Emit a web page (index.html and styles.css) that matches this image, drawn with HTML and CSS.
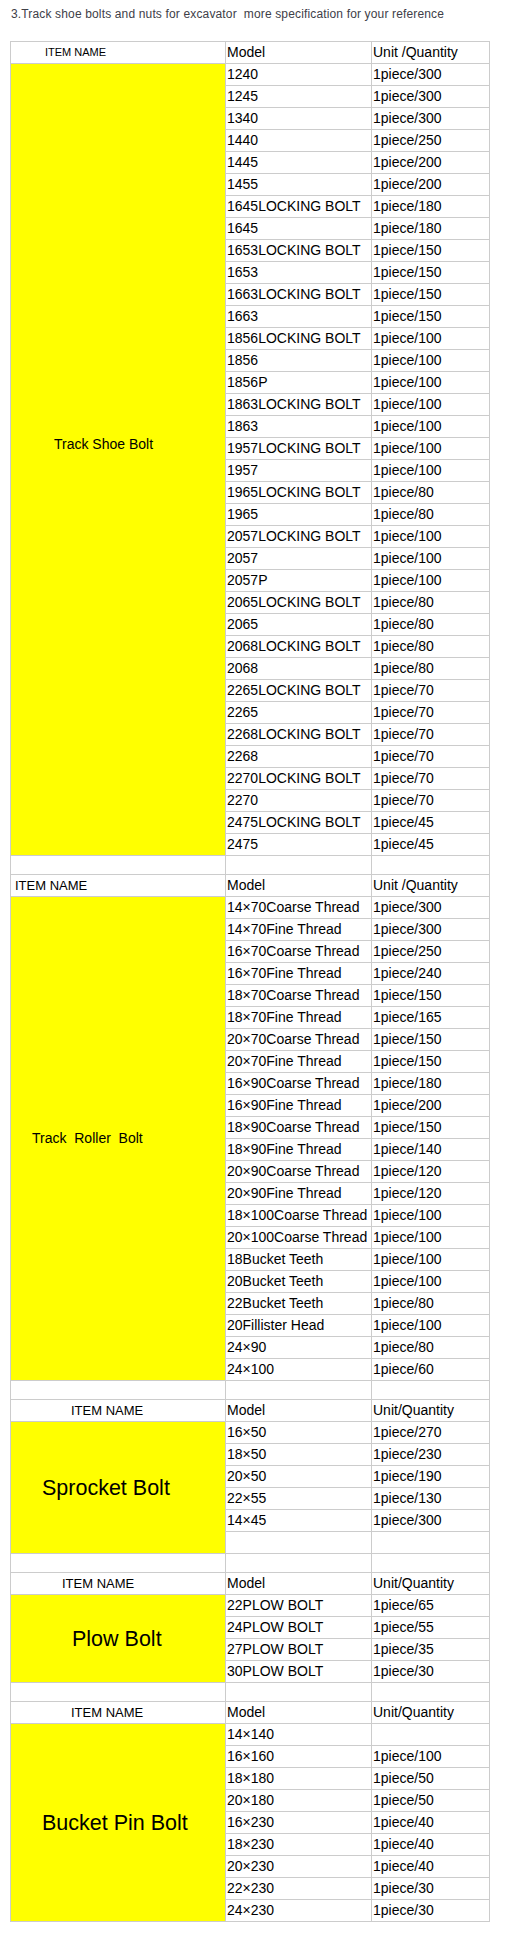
FILE: index.html
```html
<!DOCTYPE html>
<html>
<head>
<meta charset="utf-8">
<link rel="stylesheet" href="styles.css">
</head>
<body>
<div class="page">
<p class="title">3.Track shoe bolts and nuts for excavator&nbsp; more specification for your reference</p>
<table class="spec">
<colgroup><col class="c-name"><col class="c-model"><col class="c-qty"></colgroup>
<tbody>
<tr class="head"><td class="h1-name">ITEM NAME</td><td>Model</td><td>Unit /Quantity</td></tr>
<tr><td class="label lab-shoe" rowspan="36">Track Shoe Bolt</td><td>1240</td><td>1piece/300</td></tr>
<tr><td>1245</td><td>1piece/300</td></tr>
<tr><td>1340</td><td>1piece/300</td></tr>
<tr><td>1440</td><td>1piece/250</td></tr>
<tr><td>1445</td><td>1piece/200</td></tr>
<tr><td>1455</td><td>1piece/200</td></tr>
<tr><td>1645LOCKING BOLT</td><td>1piece/180</td></tr>
<tr><td>1645</td><td>1piece/180</td></tr>
<tr><td>1653LOCKING BOLT</td><td>1piece/150</td></tr>
<tr><td>1653</td><td>1piece/150</td></tr>
<tr><td>1663LOCKING BOLT</td><td>1piece/150</td></tr>
<tr><td>1663</td><td>1piece/150</td></tr>
<tr><td>1856LOCKING BOLT</td><td>1piece/100</td></tr>
<tr><td>1856</td><td>1piece/100</td></tr>
<tr><td>1856P</td><td>1piece/100</td></tr>
<tr><td>1863LOCKING BOLT</td><td>1piece/100</td></tr>
<tr><td>1863</td><td>1piece/100</td></tr>
<tr><td>1957LOCKING BOLT</td><td>1piece/100</td></tr>
<tr><td>1957</td><td>1piece/100</td></tr>
<tr><td>1965LOCKING BOLT</td><td>1piece/80</td></tr>
<tr><td>1965</td><td>1piece/80</td></tr>
<tr><td>2057LOCKING BOLT</td><td>1piece/100</td></tr>
<tr><td>2057</td><td>1piece/100</td></tr>
<tr><td>2057P</td><td>1piece/100</td></tr>
<tr><td>2065LOCKING BOLT</td><td>1piece/80</td></tr>
<tr><td>2065</td><td>1piece/80</td></tr>
<tr><td>2068LOCKING BOLT</td><td>1piece/80</td></tr>
<tr><td>2068</td><td>1piece/80</td></tr>
<tr><td>2265LOCKING BOLT</td><td>1piece/70</td></tr>
<tr><td>2265</td><td>1piece/70</td></tr>
<tr><td>2268LOCKING BOLT</td><td>1piece/70</td></tr>
<tr><td>2268</td><td>1piece/70</td></tr>
<tr><td>2270LOCKING BOLT</td><td>1piece/70</td></tr>
<tr><td>2270</td><td>1piece/70</td></tr>
<tr><td>2475LOCKING BOLT</td><td>1piece/45</td></tr>
<tr><td>2475</td><td>1piece/45</td></tr>
<tr class="blank"><td>&nbsp;</td><td></td><td></td></tr>

<tr class="head"><td class="h2-name">ITEM NAME</td><td>Model</td><td>Unit /Quantity</td></tr>
<tr><td class="label lab-roller" rowspan="22">Track&nbsp; Roller&nbsp; Bolt</td><td>14×70Coarse Thread</td><td>1piece/300</td></tr>
<tr><td>14×70Fine Thread</td><td>1piece/300</td></tr>
<tr><td>16×70Coarse Thread</td><td>1piece/250</td></tr>
<tr><td>16×70Fine Thread</td><td>1piece/240</td></tr>
<tr><td>18×70Coarse Thread</td><td>1piece/150</td></tr>
<tr><td>18×70Fine Thread</td><td>1piece/165</td></tr>
<tr><td>20×70Coarse Thread</td><td>1piece/150</td></tr>
<tr><td>20×70Fine Thread</td><td>1piece/150</td></tr>
<tr><td>16×90Coarse Thread</td><td>1piece/180</td></tr>
<tr><td>16×90Fine Thread</td><td>1piece/200</td></tr>
<tr><td>18×90Coarse Thread</td><td>1piece/150</td></tr>
<tr><td>18×90Fine Thread</td><td>1piece/140</td></tr>
<tr><td>20×90Coarse Thread</td><td>1piece/120</td></tr>
<tr><td>20×90Fine Thread</td><td>1piece/120</td></tr>
<tr><td>18×100Coarse Thread</td><td>1piece/100</td></tr>
<tr><td>20×100Coarse Thread</td><td>1piece/100</td></tr>
<tr><td>18Bucket Teeth</td><td>1piece/100</td></tr>
<tr><td>20Bucket Teeth</td><td>1piece/100</td></tr>
<tr><td>22Bucket Teeth</td><td>1piece/80</td></tr>
<tr><td>20Fillister Head</td><td>1piece/100</td></tr>
<tr><td>24×90</td><td>1piece/80</td></tr>
<tr><td>24×100</td><td>1piece/60</td></tr>
<tr class="blank"><td>&nbsp;</td><td></td><td></td></tr>

<tr class="head"><td class="h3-name">ITEM NAME</td><td>Model</td><td>Unit/Quantity</td></tr>
<tr><td class="label big lab-sprocket" rowspan="6">Sprocket Bolt</td><td>16×50</td><td>1piece/270</td></tr>
<tr><td>18×50</td><td>1piece/230</td></tr>
<tr><td>20×50</td><td>1piece/190</td></tr>
<tr><td>22×55</td><td>1piece/130</td></tr>
<tr><td>14×45</td><td>1piece/300</td></tr>
<tr><td>&nbsp;</td><td></td></tr>
<tr class="blank"><td>&nbsp;</td><td></td><td></td></tr>

<tr class="head"><td class="h4-name">ITEM NAME</td><td>Model</td><td>Unit/Quantity</td></tr>
<tr><td class="label big lab-plow" rowspan="4">Plow Bolt</td><td>22PLOW BOLT</td><td>1piece/65</td></tr>
<tr><td>24PLOW BOLT</td><td>1piece/55</td></tr>
<tr><td>27PLOW BOLT</td><td>1piece/35</td></tr>
<tr><td>30PLOW BOLT</td><td>1piece/30</td></tr>
<tr class="blank"><td>&nbsp;</td><td></td><td></td></tr>

<tr class="head"><td class="h3-name">ITEM NAME</td><td>Model</td><td>Unit/Quantity</td></tr>
<tr><td class="label big lab-bucket" rowspan="9">Bucket Pin Bolt</td><td>14×140</td><td></td></tr>
<tr><td>16×160</td><td>1piece/100</td></tr>
<tr><td>18×180</td><td>1piece/50</td></tr>
<tr><td>20×180</td><td>1piece/50</td></tr>
<tr><td>16×230</td><td>1piece/40</td></tr>
<tr><td>18×230</td><td>1piece/40</td></tr>
<tr><td>20×230</td><td>1piece/40</td></tr>
<tr><td>22×230</td><td>1piece/30</td></tr>
<tr><td>24×230</td><td>1piece/30</td></tr>
</tbody>
</table>
</div>
</body>
</html>
```
FILE: styles.css
```css
html, body {
  margin: 0;
  padding: 0;
  background: #ffffff;
}

.page {
  padding-top: 7px;
  font-family: "Liberation Sans", Arial, sans-serif;
}

.title {
  margin: 0 0 20px 11px;
  font-size: 12px;
  line-height: 14px;
  letter-spacing: 0.15px;
  color: #404048;
  white-space: nowrap;
}

.spec {
  border-collapse: collapse;
  table-layout: fixed;
  width: 479px;
  margin-left: 10px;
  color: #000000;
  font-size: 14px;
}

.c-name { width: 215px; }
.c-model { width: 146px; }
.c-qty { width: 118px; }

.spec td {
  border: 1px solid #cccccc;
  padding: 0 1px;
  line-height: 21px;
  white-space: nowrap;
  overflow: hidden;
  vertical-align: middle;
}

.spec tr.blank td {
  line-height: 18px;
}

.spec td.label {
  background: #ffff00;
  white-space: nowrap;
}

.spec td.lab-shoe {
  padding-left: 43px;
  padding-bottom: 30px;
}

.spec td.lab-roller {
  padding-left: 21px;
}

.spec td.big {
  font-size: 21.5px;
  line-height: 26px;
}

.spec td.lab-sprocket { padding-left: 31px; }
.spec td.lab-plow { padding-left: 61px; }
.spec td.lab-bucket { padding-left: 31px; }

.spec td.h1-name {
  font-size: 11px;
  padding-left: 34px;
}

.spec td.h2-name {
  font-size: 13px;
  padding-left: 4px;
}

.spec td.h3-name {
  font-size: 13px;
  padding-left: 60px;
}

.spec td.h4-name {
  font-size: 13px;
  padding-left: 51px;
}
```
